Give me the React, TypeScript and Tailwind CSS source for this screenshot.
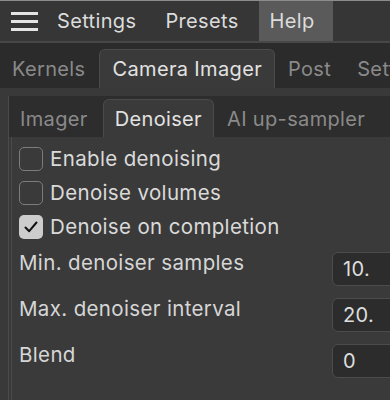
import React from 'react';

const font = { fontFamily: 'Inter, "Noto Sans", sans-serif' };

const Checkbox: React.FC<{ checked?: boolean; label: string }> = ({ checked, label }) => (
  <div className="flex items-center h-[24px] gap-[7px]">
    {checked ? (
      <div className="w-[24px] h-[24px] rounded-[5px] bg-[#cdcdcd] flex items-center justify-center">
        <svg width="16" height="16" viewBox="0 0 16 16" fill="none">
          <path d="M2.5 8.5 L6.2 12.2 L13.5 3.5" stroke="#111" strokeWidth="2" strokeLinecap="round" strokeLinejoin="round" />
        </svg>
      </div>
    ) : (
      <div className="w-[24px] h-[24px] rounded-[5px] border border-[#7c7c7c]" />
    )}
    <span className="text-[20.5px] text-[#dadada]">{label}</span>
  </div>
);

const NumberRow: React.FC<{ label: string; value: string }> = ({ label, value }) => (
  <div className="flex items-center justify-between h-[34px]">
    <span className="text-[20.5px] text-[#d6d6d6] -mt-[12px]">{label}</span>
    <div className="w-[80px] h-[34px] -mr-[22px] rounded-[6px] border border-[#4c4c4c] bg-[#2c2c2c] flex items-center pl-[10px] text-[20px] text-[#dedede]">
      {value}
    </div>
  </div>
);

export default function App() {
  return (
    <div style={font} className="w-[390px] h-[400px] overflow-hidden bg-[#393939] flex flex-col border-t border-[#8c8c8c] tracking-[0.35px]">
      {/* Menu bar */}
      <div className="h-[42px] shrink-0 bg-[#363636] border-b-2 border-[#474747] flex items-stretch text-[20px] text-[#dcdcdc]">
        <div className="pl-[11px] pr-[7px] flex flex-col justify-center gap-[5px]">
          <div className="w-[27px] h-[3px] bg-[#e4e4e4]" />
          <div className="w-[27px] h-[3px] bg-[#e4e4e4]" />
          <div className="w-[27px] h-[3px] bg-[#e4e4e4]" />
        </div>
        <div className="px-[12px] flex items-center">Settings</div>
        <div className="ml-[5px] px-[12px] flex items-center">Presets</div>
        <div className="ml-[8px] w-[74px] pl-[11px] bg-[#5a5a5a] flex items-center">Help</div>
      </div>

      {/* Main tabs */}
      <div className="h-[45px] shrink-0 bg-[#2b2b2b] flex items-end text-[20px] whitespace-nowrap overflow-hidden">
        <div className="h-[39px] pl-[12px] pr-[14px] flex items-center text-[#8a8a8a]">Kernels</div>
        <div className="h-[39px] px-[12px] flex items-center text-[#e2e2e2] bg-[#3a3a3a] rounded-t-[6px] border border-b-0 border-[#4b4b4b]">
          Camera Imager
        </div>
        <div className="h-[39px] px-[13px] flex items-center text-[#8a8a8a]">Post</div>
        <div className="h-[39px] px-[13px] flex items-center text-[#8a8a8a]">Settings</div>
      </div>

      {/* Outer content */}
      <div className="flex-1 pt-[8px] pl-[8px] flex flex-col">
        <div className="flex-1 border-l border-[#4b4b4b] flex flex-col">
          {/* Sub tabs */}
          <div className="h-[41px] shrink-0 bg-[#2d2d2d] flex items-end text-[20px] whitespace-nowrap">
            <div className="h-[37px] pl-[11px] pr-[15px] flex items-center text-[#8a8a8a]">Imager</div>
            <div className="h-[38px] px-[11px] flex items-center text-[#e2e2e2] bg-[#3a3a3a] rounded-t-[6px] border border-b-0 border-[#4b4b4b]">
              Denoiser
            </div>
            <div className="h-[37px] px-[13px] flex items-center text-[#8a8a8a]">AI up-sampler</div>
          </div>

          {/* Panel */}
          <div className="flex-1 ml-[2px] border-l border-[#4b4b4b] bg-[#3a3a3a] pl-[7px] pt-[10px] flex flex-col">
            <div className="flex flex-col gap-[10px]">
              <Checkbox label="Enable denoising" />
              <Checkbox label="Denoise volumes" />
              <Checkbox checked label="Denoise on completion" />
            </div>
            <div className="mt-[13px] flex flex-col gap-[12px]">
              <NumberRow label="Min. denoiser samples" value="10." />
              <NumberRow label="Max. denoiser interval" value="20." />
              <NumberRow label="Blend" value="0" />
            </div>
          </div>
        </div>
      </div>
    </div>
  );
}
